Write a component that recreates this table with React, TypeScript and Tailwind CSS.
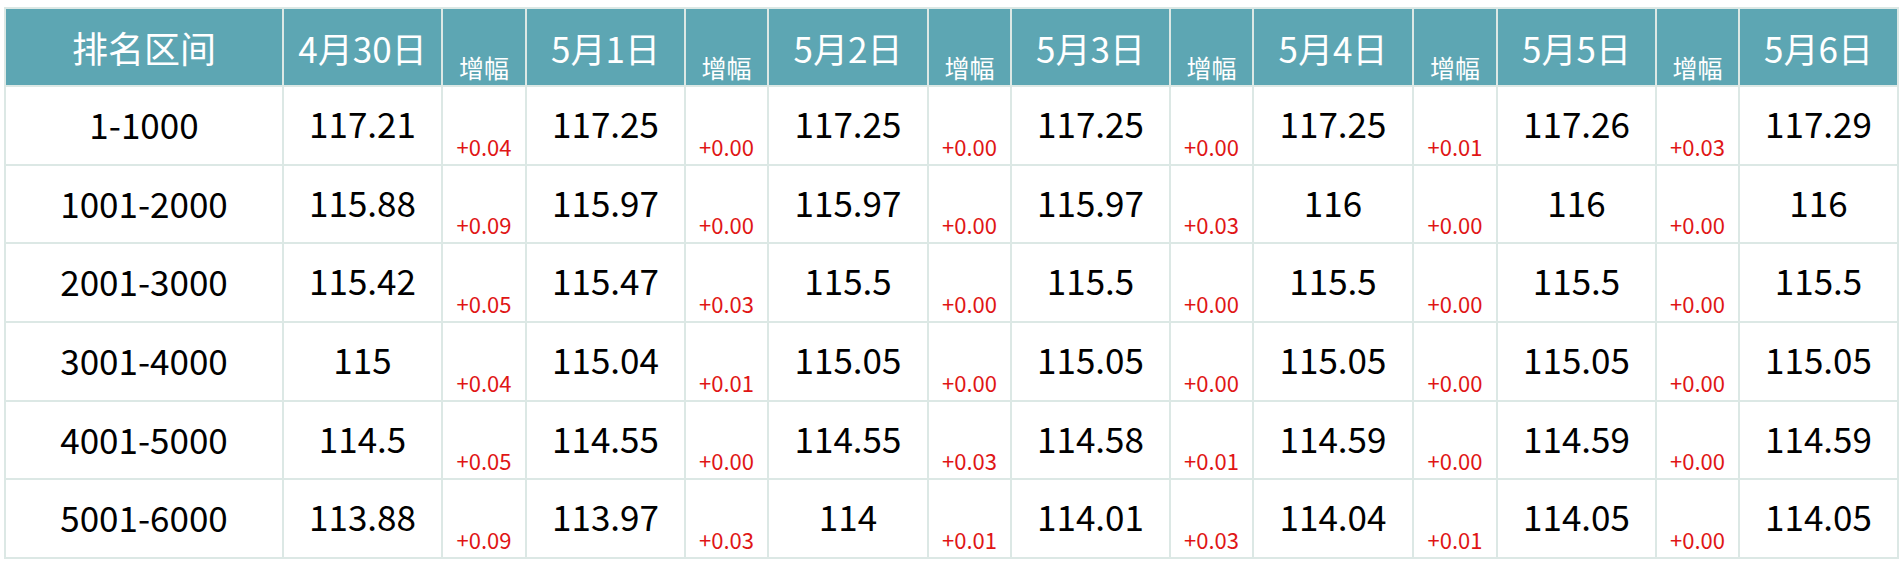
import React from "react";

const dates = ["4月30日", "5月1日", "5月2日", "5月3日", "5月4日", "5月5日", "5月6日"];

const rows: { label: string; vals: string[]; incs: string[] }[] = [
  { label: "1-1000", vals: ["117.21", "117.25", "117.25", "117.25", "117.25", "117.26", "117.29"], incs: ["+0.04", "+0.00", "+0.00", "+0.00", "+0.01", "+0.03"] },
  { label: "1001-2000", vals: ["115.88", "115.97", "115.97", "115.97", "116", "116", "116"], incs: ["+0.09", "+0.00", "+0.00", "+0.03", "+0.00", "+0.00"] },
  { label: "2001-3000", vals: ["115.42", "115.47", "115.5", "115.5", "115.5", "115.5", "115.5"], incs: ["+0.05", "+0.03", "+0.00", "+0.00", "+0.00", "+0.00"] },
  { label: "3001-4000", vals: ["115", "115.04", "115.05", "115.05", "115.05", "115.05", "115.05"], incs: ["+0.04", "+0.01", "+0.00", "+0.00", "+0.00", "+0.00"] },
  { label: "4001-5000", vals: ["114.5", "114.55", "114.55", "114.58", "114.59", "114.59", "114.59"], incs: ["+0.05", "+0.00", "+0.03", "+0.01", "+0.00", "+0.00"] },
  { label: "5001-6000", vals: ["113.88", "113.97", "114", "114.01", "114.04", "114.05", "114.05"], incs: ["+0.09", "+0.03", "+0.01", "+0.03", "+0.01", "+0.00"] },
];

export default function App() {
  const font = { fontFamily: '"Noto Sans CJK SC", "Noto Sans", sans-serif' };
  return (
    <div className="bg-white w-[1902px] h-[567px] pt-[7px] pl-[4px]" style={font}>
      <div className="inline-grid grid-cols-[276px_157px_82px_157px_81px_158px_81px_157px_81px_158px_82px_157px_81px_157px] grid-rows-[76px_repeat(6,76.7px)] gap-[2px] p-[2px] bg-[#dce8e5]">
        <div className="bg-[#5da6b3] text-white text-[36px] flex items-center justify-center leading-none">排名区间</div>
        {dates.map((d, i) => (
          <React.Fragment key={d}>
            <div className="bg-[#5da6b3] text-white text-[35px] flex items-center justify-center leading-none">{d}</div>
            {i < dates.length - 1 && (
              <div className="bg-[#5da6b3] text-white text-[25px] flex items-end justify-center pb-[5px] leading-none">增幅</div>
            )}
          </React.Fragment>
        ))}
        {rows.map((r) => (
          <React.Fragment key={r.label}>
            <div className="bg-white text-black text-[35px] flex items-center justify-center leading-none pb-[4px]">{r.label}</div>
            {r.vals.map((v, i) => (
              <React.Fragment key={i}>
                <div className="bg-white text-black text-[35px] flex items-center justify-center leading-none pb-[6px]">{v}</div>
                {i < r.incs.length && (
                  <div className="bg-white text-[#e01515] text-[22px] flex items-end justify-center pb-[7px] leading-none">{r.incs[i]}</div>
                )}
              </React.Fragment>
            ))}
          </React.Fragment>
        ))}
      </div>
    </div>
  );
}
